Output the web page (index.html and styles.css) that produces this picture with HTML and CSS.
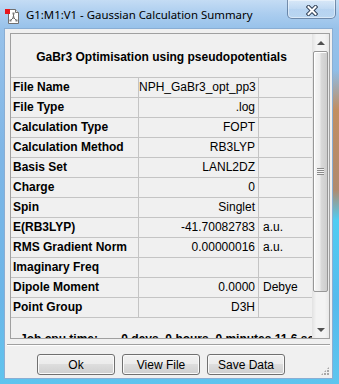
FILE: index.html
```html
<!DOCTYPE html>
<html>
<head>
<meta charset="utf-8">
<link rel="stylesheet" href="styles.css">
</head>
<body>
<div class="window">
  <div class="titlebar">
    <svg class="app-icon" viewBox="0 0 16 16" width="16" height="16">
      <path d="M3.5 1.5h7l3 3v11h-10z" fill="#fff" stroke="#707070"/>
      <path d="M10.5 1.5v3h3" fill="#e8e8e8" stroke="#707070"/>
      <g stroke="#6a6a6a" stroke-width="1" fill="none">
        <line x1="8.5" y1="5.5" x2="8.5" y2="9.5"/>
        <line x1="8.5" y1="9.5" x2="5.5" y2="12.5"/>
        <line x1="8.5" y1="9.5" x2="11.5" y2="12.5"/>
      </g>
      <g fill="#7a7a7a">
        <rect x="7.5" y="4.5" width="2" height="2"/>
        <rect x="7.5" y="8.5" width="2" height="2"/>
        <rect x="4.5" y="11.5" width="2" height="2"/>
        <rect x="10.5" y="11.5" width="2" height="2"/>
      </g>
      <rect x="0" y="1" width="5" height="5" fill="#e8161b"/>
    </svg>
    <span class="title">G1:M1:V1 - Gaussian Calculation Summary</span>
    <div class="close">
      <svg viewBox="0 0 12 11" width="12" height="11">
        <path d="M2.5 2 L9.5 9 M9.5 2 L2.5 9" stroke="#2f3f55" stroke-width="4" stroke-linecap="square"/>
        <path d="M2.5 2 L9.5 9 M9.5 2 L2.5 9" stroke="#ffffff" stroke-width="2" stroke-linecap="square"/>
      </svg>
    </div>
  </div>
  <div class="client">
    <div class="panel">
      <div class="content">
        <div class="heading">GaBr3 Optimisation using pseudopotentials</div>
        <div class="table">
          <div class="cell label">File Name</div><div class="cell value">NPH_GaBr3_opt_pp3</div><div class="cell unit"></div>
          <div class="cell label">File Type</div><div class="cell value">.log</div><div class="cell unit"></div>
          <div class="cell label">Calculation Type</div><div class="cell value">FOPT</div><div class="cell unit"></div>
          <div class="cell label">Calculation Method</div><div class="cell value">RB3LYP</div><div class="cell unit"></div>
          <div class="cell label">Basis Set</div><div class="cell value">LANL2DZ</div><div class="cell unit"></div>
          <div class="cell label">Charge</div><div class="cell value">0</div><div class="cell unit"></div>
          <div class="cell label">Spin</div><div class="cell value">Singlet</div><div class="cell unit"></div>
          <div class="cell label">E(RB3LYP)</div><div class="cell value">-41.70082783</div><div class="cell unit">a.u.</div>
          <div class="cell label">RMS Gradient Norm</div><div class="cell value">0.00000016</div><div class="cell unit">a.u.</div>
          <div class="cell label">Imaginary Freq</div><div class="cell value"></div><div class="cell unit"></div>
          <div class="cell label">Dipole Moment</div><div class="cell value">0.0000</div><div class="cell unit">Debye</div>
          <div class="cell label">Point Group</div><div class="cell value">D3H</div><div class="cell unit"></div>
        </div>
        <div class="cpu">Job cpu time:       0 days  0 hours  0 minutes 11.6 seconds.</div>
      </div>
      <div class="scrollbar">
        <div class="sb-btn"><span class="arrow-up"></span></div>
        <div class="thumb"></div>
        <div class="track"></div>
        <div class="sb-btn"><span class="arrow-down"></span></div>
      </div>
    </div>
    <div class="separator"></div>
    <div class="buttons">
      <div class="btn">Ok</div>
      <div class="btn">View File</div>
      <div class="btn">Save Data</div>
    </div>
    <div class="grip"></div>
  </div>
</div>
</body>
</html>
```
FILE: styles.css
```css
* { box-sizing: border-box; }
html, body { margin: 0; padding: 0; }
body {
  width: 339px;
  height: 384px;
  overflow: hidden;
  font-family: "Liberation Sans", Arial, sans-serif;
  font-size: 12px;
  color: #000;
}
.window {
  width: 339px;
  height: 384px;
  display: flex;
  flex-direction: column;
  position: relative;
  background:
    linear-gradient(to bottom, transparent 70px, rgba(214,128,52,0.75) 110px, rgba(200,120,60,0.7) 190px, rgba(70,210,245,0.8) 220px, rgba(70,190,240,0.6) 300px, rgba(90,200,240,0.4) 384px) right top / 6px 100% no-repeat,
    linear-gradient(to bottom, #c4dcf4 0px, #abcdef 14px, #98c2ea 28px, #7fb6e6 150px, #6cb6e8 300px, #5ec4ee 384px);
}
.titlebar {
  height: 28px;
  flex-shrink: 0;
  display: flex;
  align-items: flex-start;
}
.app-icon {
  margin: 8px 0 0 5px;
  flex-shrink: 0;
}
.title {
  margin: 7px 0 0 5px;
  font-family: "Noto Sans", sans-serif;
  font-size: 11.4px;
  line-height: 16px;
  color: #000;
  white-space: nowrap;
}
.close {
  margin-left: auto;
  margin-right: 3px;
  width: 49px;
  height: 19px;
  border: 1px solid rgba(40, 70, 110, 0.55);
  border-top: none;
  border-radius: 0 0 5px 5px;
  background: linear-gradient(to bottom, rgba(255,255,255,0.35), rgba(255,255,255,0.15) 50%, rgba(255,255,255,0.05) 51%, rgba(255,255,255,0.25));
  box-shadow: inset 0 0 0 1px rgba(255,255,255,0.45);
  display: flex;
  align-items: center;
  justify-content: center;
  padding-top: 2px;
}
.client {
  flex: 1;
  margin: 0 6px 5px 4px;
  background: #f0f0f0;
  border: 1px solid #8aaed4;
  display: flex;
  flex-direction: column;
  position: relative;
}
.panel {
  margin: 4px 2px 0 5px;
  height: 306px;
  border: 1px solid #a0a0a0;
  display: flex;
  flex-shrink: 0;
}
.content {
  flex: 1;
  overflow: hidden;
}
.heading {
  height: 43px;
  padding-top: 3px;
  display: flex;
  align-items: center;
  justify-content: center;
  font-weight: bold;
  white-space: nowrap;
}
.table {
  display: grid;
  grid-template-columns: 128px 120px 53px;
  border-top: 1px solid #c4c4c4;
}
.cell {
  height: 20px;
  line-height: 19px;
  border-bottom: 1px solid #c4c4c4;
  white-space: nowrap;
  overflow: hidden;
}
.label {
  font-weight: bold;
  padding-left: 2px;
  border-right: 1px solid #c4c4c4;
}
.value {
  text-align: right;
  padding-right: 3px;
  border-right: 1px solid #c4c4c4;
}
.unit {
  padding-left: 4px;
}
.cpu {
  margin-top: 14px;
  padding-left: 9px;
  font-weight: bold;
  white-space: pre;
  line-height: 14px;
}
.scrollbar {
  width: 17px;
  flex-shrink: 0;
  display: flex;
  flex-direction: column;
  background: linear-gradient(to right, #e2e2e2, #f3f3f3 25%, #f3f3f3 75%, #e8e8e8);
}
.sb-btn {
  height: 17px;
  flex-shrink: 0;
  display: flex;
  align-items: center;
  justify-content: center;
}
.arrow-up {
  width: 0;
  height: 0;
  border-left: 4px solid transparent;
  border-right: 4px solid transparent;
  border-bottom: 4px solid #505050;
}
.arrow-down {
  width: 0;
  height: 0;
  border-left: 4px solid transparent;
  border-right: 4px solid transparent;
  border-top: 4px solid #505050;
}
.thumb {
  height: 241px;
  margin: 0 1px;
  flex-shrink: 0;
  border: 1px solid #979797;
  border-radius: 2px;
  background: linear-gradient(to right, #f7f7f7, #ececec 45%, #d9d9d9 55%, #cdcdcd);
  box-shadow: inset 1px 1px 0 #ffffff;
  display: flex;
  align-items: center;
  justify-content: center;
}
.thumb::before {
  content: "";
  width: 7px;
  height: 7px;
  background: repeating-linear-gradient(to bottom, #8a8a8a 0, #8a8a8a 1px, #f4f4f4 1px, #f4f4f4 2px);
}
.track { flex: 1; }
.separator {
  margin: 5px 2px 0 2px;
  height: 2px;
  border-top: 1px solid #a0a0a0;
  border-bottom: 1px solid #ffffff;
  flex-shrink: 0;
}
.buttons {
  display: flex;
  gap: 7px;
  padding-left: 32px;
  margin-top: 8px;
}
.btn {
  width: 78px;
  height: 21px;
  border: 1px solid #707070;
  border-radius: 3px;
  background: linear-gradient(to bottom, #f2f2f2 0%, #ebebeb 50%, #dddddd 50%, #cfcfcf 100%);
  box-shadow: inset 0 0 0 1px #fafafa;
  display: flex;
  align-items: center;
  justify-content: center;
  font-size: 12px;
  color: #000;
}
.grip {
  position: absolute;
  right: 3px;
  bottom: 3px;
  width: 8px;
  height: 8px;
  background:
    radial-gradient(circle at 1px 1px, #a8a8a8 1px, transparent 1.2px) 0 0 / 3px 3px;
  clip-path: polygon(100% 0, 100% 100%, 0 100%);
}
```
